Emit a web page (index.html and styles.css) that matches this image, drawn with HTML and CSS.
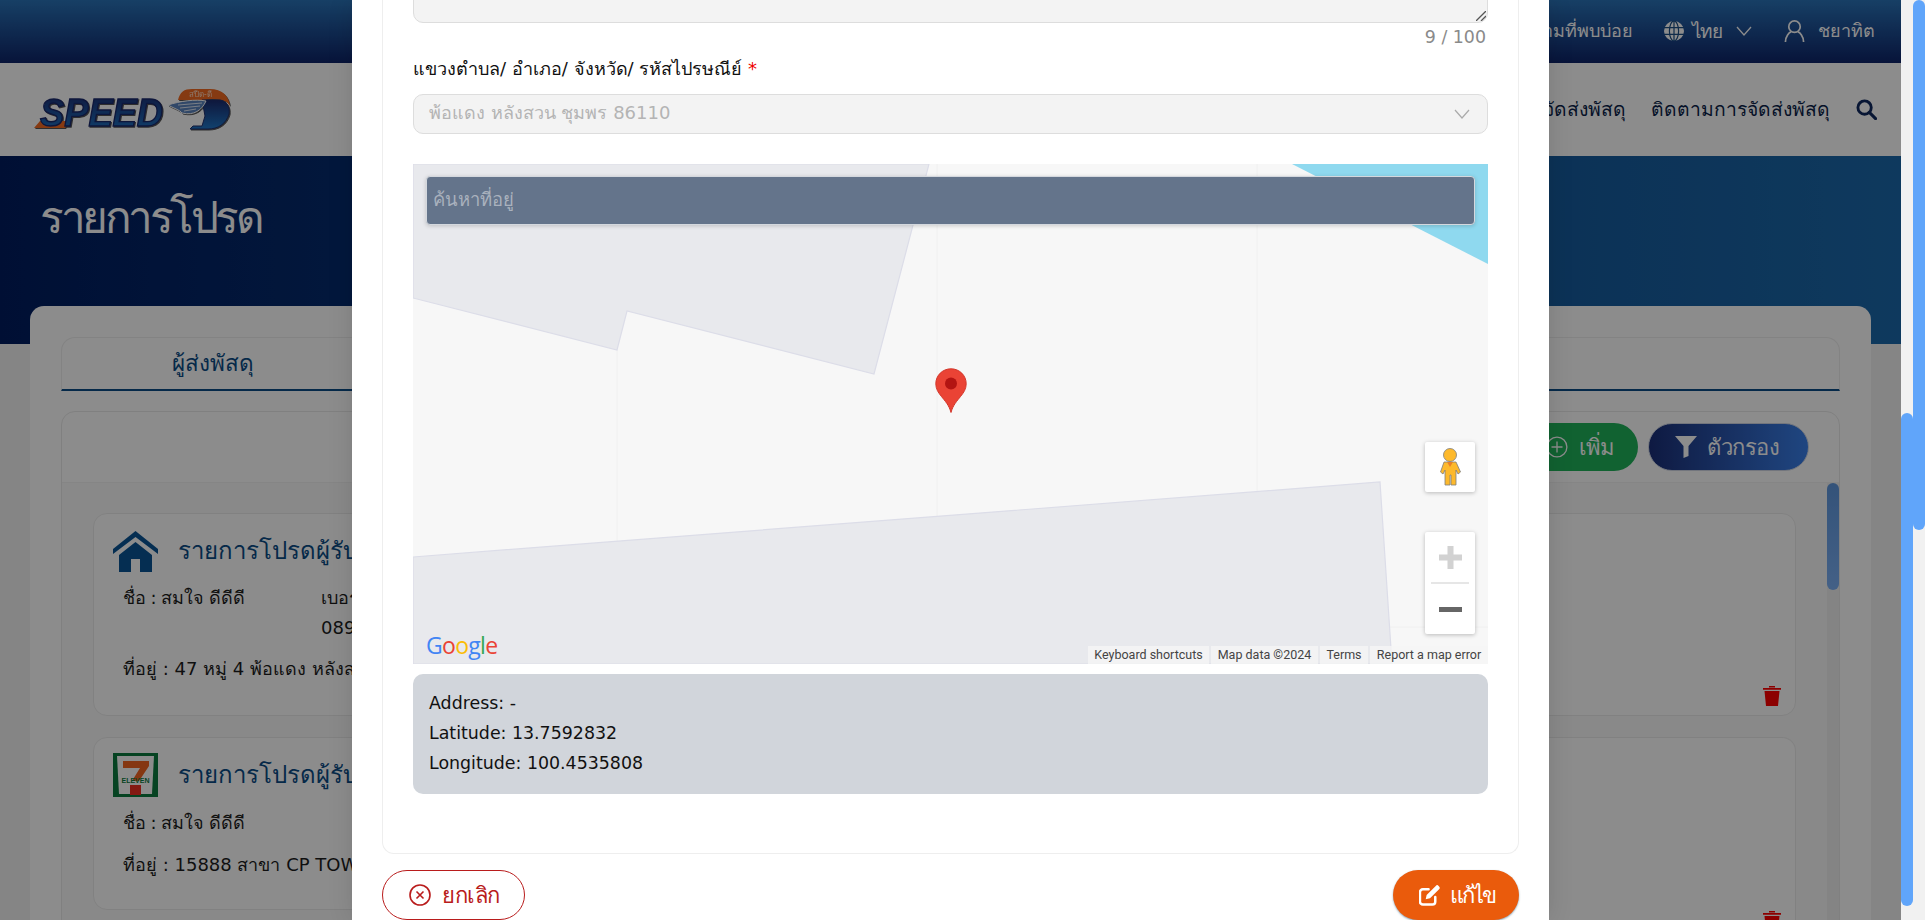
FILE: index.html
```html
<!DOCTYPE html>
<html lang="th">
<head>
<meta charset="utf-8">
<title>รายการโปรด</title>
<link rel="stylesheet" href="styles.css">
</head>
<body>
<div class="shell">
  <div class="page">
    <header class="topbar">
      <span class="top-text faq">คำถามที่พบบ่อย</span>
      <svg class="globe" viewBox="0 0 20 20"><circle cx="10" cy="10" r="10" fill="#fff"/><g fill="none" stroke="#1d4f86" stroke-width="1.2"><ellipse cx="10" cy="10" rx="4.6" ry="10"/><path d="M10 0v20M0 6.6h20M0 13.4h20"/></g></svg>
      <span class="top-text lang">ไทย</span>
      <svg class="chev-top" viewBox="0 0 16 10"><path d="M1 1l7 8 7-8" fill="none" stroke="#fff" stroke-width="1.3"/></svg>
      <svg class="user" viewBox="0 0 22 24"><g fill="none" stroke="#fff" stroke-width="1.8"><circle cx="11" cy="7.5" r="6"/><path d="M1.500 23.500c0-6 4-10 6-10.500M20.500 23.500c0-6-4-10-6-10.500"/></g></svg>
      <span class="top-text uname">ชยาทิต</span>
    </header>

    <nav class="navbar">
      <svg class="logo" viewBox="0 0 200 44">
        <defs>
          <linearGradient id="lg" x1="0" y1="0" x2="0" y2="1"><stop offset="0" stop-color="#1b2a6e"/><stop offset="1" stop-color="#1f78c8"/></linearGradient>
        </defs>
        <path d="M2 40L8 33h30l-5 7z" fill="#f26a21"/>
        <text class="logo-speed" x="8" y="38" textLength="123" lengthAdjust="spacingAndGlyphs">SPEED</text>
        <path d="M146 12C148 4 152 1 160 1h18c12 0 19 7 20 17l-3-4c-6-3-16-4-23-2z" fill="#f26a21"/>
        <path d="M170 12h18c7 1 10 7 9 14-3 10-11 15-21 15h-18l3-3h9l3-10z" fill="url(#lg)" stroke="#20306e" stroke-width="1"/>
        <path d="M136 17c12-4 28-6 38-4-4 9-12 15-24 12-2-3-9-5-14-8z" fill="#5a83bd" stroke="#fff" stroke-width="1"/>
        <path d="M146 17l24-2M148 20l20-2M152 23l12-2" stroke="#fff" stroke-width=".8"/>
        <text class="logo-thai" x="157" y="9">สปีด-ดี</text>
      </svg>
      <div class="nav-links">
        <span class="nav-link">สถานะการจัดส่งพัสดุ</span>
        <span class="nav-link">ติดตามการจัดส่งพัสดุ</span>
      </div>
      <svg class="search" viewBox="0 0 22 22"><circle cx="9" cy="9" r="7" fill="none" stroke="#10295f" stroke-width="3"/><path d="M14 14l6.500 6.500" stroke="#10295f" stroke-width="3.200" stroke-linecap="round"/></svg>
    </nav>

    <section class="hero"><h1 class="hero-title">รายการโปรด</h1></section>

    <main class="main">
      <div class="card">
        <div class="tabs"><span class="tab">ผู้ส่งพัสดุ</span></div>
        <div class="panel">
          <div class="toolbar">
            <span class="pill pill-add">
              <svg class="pill-icon" viewBox="0 0 20 20"><circle cx="10" cy="10" r="9" fill="none" stroke="#fff" stroke-width="1.200"/><path d="M10 5v10M5 10h10" stroke="#fff" stroke-width="1.200"/></svg>
              เพิ่ม
            </span>
            <span class="pill pill-filter">
              <svg class="funnel" viewBox="0 0 22 22"><path d="M0 0h22l-8.500 10v10l-5 2V10z" fill="#fff"/></svg>
              ตัวกรอง
            </span>
          </div>
          <div class="list-wrap">
            <div class="list">
              <article class="item item-one">
                <div class="item-body">
                  <div class="item-head">
                    <svg class="place" viewBox="0 0 45 41"><path d="M22.500 0L45 18v5L22.500 6 0 23v-5z" fill="#0a5596"/><path d="M6 24L22.500 11 39 24v17H27V28H18v13H6z" fill="#0a5596"/></svg>
                    <h2 class="item-title">รายการโปรดผู้รับ</h2>
                  </div>
                  <div class="meta">
                    <span class="meta-name">ชื่อ : สมใจ ดีดีดี</span>
                    <span class="meta-phone">เบอร์โทรศัพท์ :<br>0891234567</span>
                  </div>
                  <p class="addr">ที่อยู่ : 47 หมู่ 4 พ้อแดง หลังสวน ชุมพร 86110</p>
                </div>
                <svg class="trash" viewBox="0 0 18 20"><path d="M6 1.500h6V0H6zM0 2h18v1.800H0zM1.500 5h15L15 20H3z" fill="#f00"/></svg>
              </article>
              <div class="item-split">
                <article class="item-left">
                  <div class="item-head">
                    <svg class="place seven" viewBox="0 0 45 44"><rect width="45" height="44" fill="#0c7a3e"/><path d="M4 3h37l-2 38H6z" fill="#fff"/><path d="M10 8h26v5L26 28h-7l8-13H10z" fill="#f26522"/><text class="seven-text" x="22.500" y="30" text-anchor="middle">ELEVEN</text><rect x="17" y="32" width="11" height="10" fill="#ee3124"/></svg>
                    <h2 class="item-title">รายการโปรดผู้รับ</h2>
                  </div>
                  <div class="meta"><span class="meta-name">ชื่อ : สมใจ ดีดีดี</span></div>
                  <p class="addr addr-two">ที่อยู่ : 15888 สาขา CP TOWER</p>
                </article>
                <article class="item-right">
                  <svg class="trash" viewBox="0 0 18 20"><path d="M6 1.500h6V0H6zM0 2h18v1.800H0zM1.500 5h15L15 20H3z" fill="#f00"/></svg>
                </article>
              </div>
            </div>
            <div class="list-bar"><div class="list-thumb"></div></div>
          </div>
        </div>
      </div>
    </main>

    <div class="overlay">
      <div class="modal">
        <div class="form-card">
          <div class="fake-textarea">
            <svg class="resizer" viewBox="0 0 10 10"><path d="M0 10L10 0M5 10l5-5" stroke="#555" stroke-width="1.300"/></svg>
          </div>
          <div class="counter">9 / 100</div>
          <label class="field-label">แขวงตำบล/ อำเภอ/ จังหวัด/ รหัสไปรษณีย์ <span class="req">*</span></label>
          <div class="select">
            <span class="select-value">พ้อแดง หลังสวน ชุมพร 86110</span>
            <svg class="select-chev" viewBox="0 0 16 10"><path d="M1 1l7 8 7-8" fill="none" stroke="#aaa" stroke-width="1.200"/></svg>
          </div>

          <div class="map">
            <svg class="map-art" viewBox="0 0 1075 500">
              <path d="M204 0V500M524 0V500M844 0V500M0 463H1075" stroke="#f0f0f0" stroke-width="1"/>
              <path d="M0 0H516L461 210 214 147 204 186 0 134Z" fill="#e8e9ed" stroke="#dcdde8" stroke-width="1.200"/>
              <path d="M0 393L967 318 979 500H0Z" fill="#e8e9ed" stroke="#dcdde8" stroke-width="1.200"/>
              <path d="M879 0H1075V100Z" fill="#8fd9ef"/>
            </svg>
            <div class="map-search">ค้นหาที่อยู่</div>
            <svg class="pin" viewBox="0 0 32 45"><path d="M16 .8C7.500.8.800 7.400.800 15.800c0 5 2.400 8.700 5.500 12.500C10 33 14 37 16 44.500 18 37 22 33 25.700 28.300c3.100-3.800 5.500-7.500 5.500-12.500C31.200 7.400 24.500.8 16 .8z" fill="#ea4335" stroke="#d3372b" stroke-width="1"/><circle cx="16" cy="15.500" r="6" fill="#b31412"/></svg>
            <div class="map-btn pegman-btn">
              <svg class="pegman" viewBox="0 0 22 38"><circle cx="11" cy="7" r="6.500" fill="#fdb92c" stroke="#7d7d7d" stroke-width=".8"/><path d="M5 14h12l4.500 10-2.500 2-2-4v15h-5V27h-1v10H6V22l-2 4-2.500-2z" fill="#fdb92c" stroke="#7d7d7d" stroke-width=".8"/><path d="M8 14h6l-3 5z" fill="#e8812a"/></svg>
            </div>
            <div class="map-btn zoom-box">
              <span class="zoom-cell"><svg class="zoom-ico" viewBox="0 0 23 23"><path d="M8.500 0h6v8.500H23v6h-8.500V23h-6v-8.500H0v-6h8.500z" fill="#d2d2d2"/></svg></span>
              <span class="zoom-sep"></span>
              <span class="zoom-cell"><svg class="zoom-ico" viewBox="0 0 23 23"><rect y="9" width="23" height="5" fill="#666"/></svg></span>
            </div>
            <div class="google"><span class="g-b">G</span><span class="g-r">o</span><span class="g-y">o</span><span class="g-b">g</span><span class="g-g">l</span><span class="g-r">e</span></div>
            <div class="attrib">
              <span class="attrib-item attrib-a">Keyboard shortcuts</span>
              <span class="attrib-item attrib-b">Map data ©2024</span>
              <span class="attrib-item attrib-c">Terms</span>
              <span class="attrib-item attrib-d">Report a map error</span>
            </div>
          </div>

          <div class="info">
            <div>Address: -</div>
            <div>Latitude: 13.7592832</div>
            <div>Longitude: 100.4535808</div>
          </div>
        </div>
        <div class="actions">
          <button class="btn btn-cancel">
            <svg class="btn-icon" viewBox="0 0 22 22"><circle cx="11" cy="11" r="10" fill="none" stroke="#b91c1c" stroke-width="1.600"/><path d="M7.500 7.500l7 7M14.500 7.500l-7 7" stroke="#b91c1c" stroke-width="1.600"/></svg>
            ยกเลิก
          </button>
          <button class="btn btn-edit">
            <svg class="btn-icon" viewBox="0 0 23 22"><path d="M17 13v5a3 3 0 0 1-3 3H4a3 3 0 0 1-3-3V8a3 3 0 0 1 3-3h6" fill="none" stroke="#fff" stroke-width="2.600" stroke-linecap="round"/><path d="M8 11L17.500 1.500a2 2 0 0 1 3 0l.5.500a2 2 0 0 1 0 3L11.500 14.500 7 15.500z" fill="#fff"/></svg>
            แก้ไข
          </button>
        </div>
      </div>
    </div>
  </div>
  <div class="rail"><div class="rail-thumb rail-thumb-inner"></div></div>
  <div class="rail"><div class="rail-thumb rail-thumb-outer"></div></div>
</div>
</body>
</html>
```
FILE: styles.css
```css
* { box-sizing: border-box; }
html, body { margin: 0; height: 100%; overflow: hidden; }
body { font-family: "DejaVu Sans", "Noto Sans", sans-serif; color: #222; }
.shell { display: flex; height: 920px; overflow: hidden; }
.page { position: relative; flex: 1; min-width: 0; height: 920px; overflow: hidden; background: #f2f2f2; }

.rail { width: 12px; flex: none; background: #f1f1f1; }
.rail-thumb { background: #60a5fa; border-radius: 6px; }
.rail-thumb-inner { height: 493px; margin-top: 413px; }
.rail-thumb-outer { height: 530px; }

.topbar { height: 63px; display: flex; align-items: center; justify-content: flex-end; padding: 0 26px 2px 0; background: linear-gradient(180deg, #2a74b9 0%, #0e2469 100%); color: #fff; }
.top-text { font-size: 18px; }
.faq { margin-right: 31px; }
.globe { width: 20px; height: 20px; margin-right: 8px; }
.lang { font-size: 19px; letter-spacing: -1.500px; }
.chev-top { width: 16px; height: 10px; margin: 0 32px 0 15px; }
.user { width: 21px; height: 24px; margin-right: 13px; }

.navbar { height: 93px; display: flex; align-items: center; background: #fff; padding: 0 24px 0 32px; }
.logo { width: 200px; height: 44px; overflow: visible; filter: drop-shadow(1px 1px 0 #555); }
.logo-speed { font: italic 700 39px "Liberation Sans", sans-serif; fill: url(#lg); stroke: #1b2a6e; stroke-width: 1.400px; }
.logo-thai { font: 8px "Noto Sans", sans-serif; fill: #ffd9c0; }
.nav-links { display: flex; gap: 25px; margin-left: auto; padding-bottom: 2px; font-size: 19.300px; color: #0c1f4a; }
.nav-link { white-space: nowrap; }
.search { width: 21px; height: 21px; margin-left: 26px; }

.hero { height: 188px; background: linear-gradient(90deg, #001d60 0%, #1b69ab 100%); padding: 32px 40px; }
.hero-title { margin: 0; font-size: 44px; font-weight: 400; color: #fff; line-height: 60px; letter-spacing: -3.500px; }

.main { padding: 0 30px; }
.card { margin-top: -38px; background: #fff; border-radius: 14px 14px 0 0; padding: 31px; height: 700px; }
.tabs { height: 54px; display: flex; border: 1px solid #eee; border-bottom: 2px solid #0a4c86; border-radius: 14px 14px 0 0; }
.tab { width: 302px; text-align: center; font-size: 22.500px; line-height: 50px; color: #0a4c86; }
.panel { margin-top: 20px; border: 1px solid #eaeaea; border-radius: 14px 14px 0 0; }
.toolbar { height: 71px; display: flex; align-items: center; justify-content: flex-end; gap: 10px; padding-right: 30px; border-bottom: 1px solid #f2f2f2; }
.pill { height: 48px; border-radius: 24px; display: inline-flex; align-items: center; color: #fff; font-size: 22px; letter-spacing: -.800px; }
.pill-add { width: 122px; padding-left: 30px; gap: 11px; background: #1fb25a; }
.pill-icon { width: 22px; height: 22px; }
.pill-filter { width: 161px; padding-left: 26px; gap: 10px; letter-spacing: -.400px; background: linear-gradient(90deg, #1b2f78, #3a80ea); border: 1px solid #cfd6e4; }
.funnel { width: 22px; height: 22px; }
.list-wrap { display: flex; height: 600px; background: #f9f9f9; overflow: hidden; }
.list { flex: 1; padding: 30px 31px 0 31px; min-width: 0; }
.list-bar { width: 12px; background: #f0f0f0; }
.list-thumb { height: 107px; border-radius: 6px; background: linear-gradient(180deg, #5f97dd, #7cb0f5); }

.item-one { height: 203px; display: flex; justify-content: space-between; align-items: flex-end; background: #fff; border: 1px solid #ececec; border-radius: 14px; padding: 0 14px 9px 19px; }
.item-body { align-self: flex-start; padding-top: 17px; }
.item-head { display: flex; align-items: center; gap: 20px; }
.place { width: 45px; height: 41px; flex: none; }
.place.seven { height: 44px; }
.seven-text { font: 700 7px "Liberation Sans", sans-serif; fill: #0c7a3e; }
.item-title { margin: 0; font-size: 24px; font-weight: 400; color: #0a4c86; line-height: 41px; white-space: nowrap; }
.meta { display: flex; padding-left: 10px; margin-top: 11px; font-size: 18px; line-height: 30px; color: #1d1d1d; word-spacing: -1.200px; }
.meta-name { width: 198px; }
.addr { margin: 11px 0 0 10px; font-size: 18px; line-height: 30px; color: #1d1d1d; white-space: nowrap; }
.addr-two { margin-top: 12px; }
.trash { width: 18px; height: 20px; flex: none; }
.item-split { display: flex; margin-top: 21px; align-items: flex-start; }
.item-left { width: 700px; height: 173px; background: #fff; border: 1px solid #ececec; border-radius: 14px; padding: 15px 0 0 19px; }
.item-right { flex: 1; height: 204px; display: flex; justify-content: flex-end; align-items: flex-end; background: #fff; border: 1px solid #ececec; border-left: 0; border-radius: 0 14px 14px 0; padding: 0 14px 9px 0; }

.overlay { position: absolute; inset: 0; display: flex; justify-content: center; align-items: flex-end; background: rgba(0, 0, 0, .45); }
.modal { width: 1197px; height: 920px; flex: none; display: flex; flex-direction: column; justify-content: flex-end; padding: 0 30px; background: #fff; box-shadow: 0 0 24px rgba(0, 0, 0, .12); }
.form-card { flex: none; border: 1px solid #eeeeee; border-top: 0; border-radius: 0 0 12px 12px; padding: 0 30px 59px; }
.fake-textarea { position: relative; height: 100px; background: #f3f3f3; border: 1px solid #ddd; border-radius: 10px; }
.resizer { position: absolute; right: 1px; bottom: 1px; width: 10px; height: 10px; }
.counter { margin-top: 2px; text-align: right; font-size: 17.400px; line-height: 24px; color: #8a8a8a; padding-right: 2px; }
.field-label { display: block; margin-top: 6px; font-size: 18px; line-height: 28px; color: #111; }
.req { color: #e00; }
.select { display: flex; align-items: center; justify-content: space-between; height: 40px; margin-top: 11px; padding: 0 17px 3px 15px; background: #f3f3f3; border: 1px solid #ddd; border-radius: 10px; color: #b4b4b4; font-size: 18px; }
.select-chev { width: 16px; height: 10px; margin-top: 3px; }
.map { position: relative; height: 500px; margin-top: 30px; background: #f7f7f7; overflow: hidden; }
.map-art { position: absolute; inset: 0; width: 100%; height: 100%; }
.map-search { position: absolute; left: 13px; top: 12px; width: 1049px; height: 49px; padding-left: 6px; background: #64748b; border: 1px solid #d4d8de; border-radius: 4px; box-shadow: 0 1px 4px rgba(0, 0, 0, .18); color: #a9b1bd; font-size: 18.400px; line-height: 45px; }
.pin { position: absolute; left: 522px; top: 204px; width: 32px; height: 45px; }
.map-btn { position: absolute; left: 1012px; width: 50px; background: #fff; border-radius: 2px; box-shadow: 0 1px 4px rgba(0, 0, 0, .25); }
.pegman-btn { top: 278px; height: 50px; display: flex; align-items: center; justify-content: center; }
.pegman { width: 22px; height: 38px; }
.zoom-box { top: 368px; height: 102px; display: flex; flex-direction: column; align-items: center; }
.zoom-cell { flex: 1; display: flex; align-items: center; justify-content: center; }
.zoom-ico { width: 23px; height: 23px; }
.zoom-sep { width: 38px; height: 2px; background: #e6e6e6; }
.google { position: absolute; left: 13px; top: 466px; font: 500 23px/30px "Open Sans", sans-serif; letter-spacing: -.700px; }
.g-b { color: #4285f4; } .g-r { color: #ea4335; } .g-y { color: #fbbc05; } .g-g { color: #34a853; }
.attrib { position: absolute; right: 0; bottom: 0; height: 18px; display: flex; gap: 2px; font: 12.500px/18px Roboto, sans-serif; color: #444; }
.attrib-item { background: rgba(245, 245, 245, .8); text-align: center; white-space: nowrap; }
.attrib-a { width: 121px; } .attrib-b { width: 107px; } .attrib-c { width: 48px; } .attrib-d { width: 118px; }
.info { height: 120px; margin-top: 10px; padding: 14px 16px; background: #d1d5db; border-radius: 10px; font-size: 17.400px; line-height: 30px; color: #111; }
.actions { flex: none; height: 66px; padding-top: 16px; display: flex; justify-content: space-between; }
.btn { height: 50px; border-radius: 25px; display: inline-flex; align-items: center; font: 22px "DejaVu Sans", "Noto Sans", sans-serif; padding: 0; }
.btn-cancel { width: 143px; padding-left: 26px; gap: 11px; letter-spacing: -.500px; background: #fff; border: 1px solid #b91c1c; color: #b91c1c; }
.btn-edit { width: 126px; padding-left: 26px; gap: 9px; letter-spacing: -2px; background: #ea5b0c; border: 0; color: #fff; box-shadow: 0 1px 2px rgba(60, 100, 130, .6); }
.btn-icon { width: 22px; height: 22px; }
```
